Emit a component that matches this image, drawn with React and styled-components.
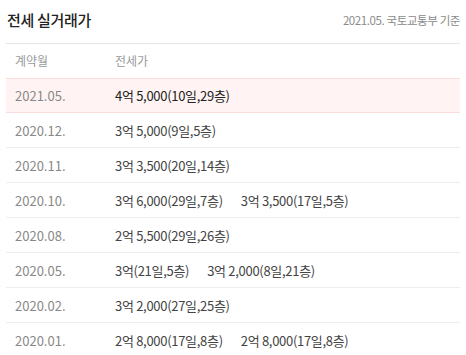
import styled, { createGlobalStyle } from 'styled-components';

const GlobalStyle = createGlobalStyle`
  body {
    margin: 0;
    background: #ffffff;
    font-family: 'Noto Sans CJK KR', 'Noto Sans', sans-serif;
  }
`;

const Panel = styled.section`
  width: 454px;
  padding: 0 6px;
`;

const TitleBar = styled.div`
  height: 44px;
  display: flex;
  align-items: center;
  justify-content: space-between;
  border-bottom: 1px solid #e6e6e6;
  box-sizing: border-box;
  padding: 0 0 4px 1px;
`;

const Title = styled.h2`
  margin: 0;
  font-size: 15px;
  font-weight: 500;
  color: #222222;
  letter-spacing: -0.3px;
`;

const Source = styled.span`
  font-size: 11.5px;
  color: #8a8a8a;
  letter-spacing: -0.4px;
`;

const Row = styled.div`
  display: grid;
  grid-template-columns: 100px 1fr;
  align-items: center;
  height: ${props => (props.head ? '34px' : '35px')};
  box-sizing: border-box;
  padding-left: 9px;
  font-size: 13px;
  background-color: ${props => (props.active ? '#fff4f3' : 'transparent')};
  border-bottom: 1px solid ${props => (props.active ? '#fbdcdc' : props.head ? 'transparent' : '#eeeeee')};
  border-top: ${props => (props.active ? '1px solid #fbdcdc' : 'none')};
`;

const HeadCell = styled.span`
  color: #9a9a9a;
  font-size: 12px;
`;

const DateCell = styled.span`
  color: #888888;
`;

const Prices = styled.div`
  display: flex;
  gap: 18px;
  color: ${props => (props.active ? '#222222' : '#444444')};
  letter-spacing: -0.3px;
`;

const deals = [
  { month: '2021.05.', prices: ['4억 5,000(10일,29층)'], active: true },
  { month: '2020.12.', prices: ['3억 5,000(9일,5층)'] },
  { month: '2020.11.', prices: ['3억 3,500(20일,14층)'] },
  { month: '2020.10.', prices: ['3억 6,000(29일,7층)', '3억 3,500(17일,5층)'] },
  { month: '2020.08.', prices: ['2억 5,500(29일,26층)'] },
  { month: '2020.05.', prices: ['3억(21일,5층)', '3억 2,000(8일,21층)'] },
  { month: '2020.02.', prices: ['3억 2,000(27일,25층)'] },
  { month: '2020.01.', prices: ['2억 8,000(17일,8층)', '2억 8,000(17일,8층)'] },
];

export default function App() {
  return (
    <>
      <GlobalStyle />
      <Panel>
        <TitleBar>
          <Title>전세 실거래가</Title>
          <Source>2021.05. 국토교통부 기준</Source>
        </TitleBar>
        <Row head>
          <HeadCell>계약월</HeadCell>
          <HeadCell>전세가</HeadCell>
        </Row>
        {deals.map(deal => (
          <Row key={deal.month} active={deal.active}>
            <DateCell>{deal.month}</DateCell>
            <Prices active={deal.active}>
              {deal.prices.map((p, i) => (
                <span key={i}>{p}</span>
              ))}
            </Prices>
          </Row>
        ))}
      </Panel>
    </>
  );
}
